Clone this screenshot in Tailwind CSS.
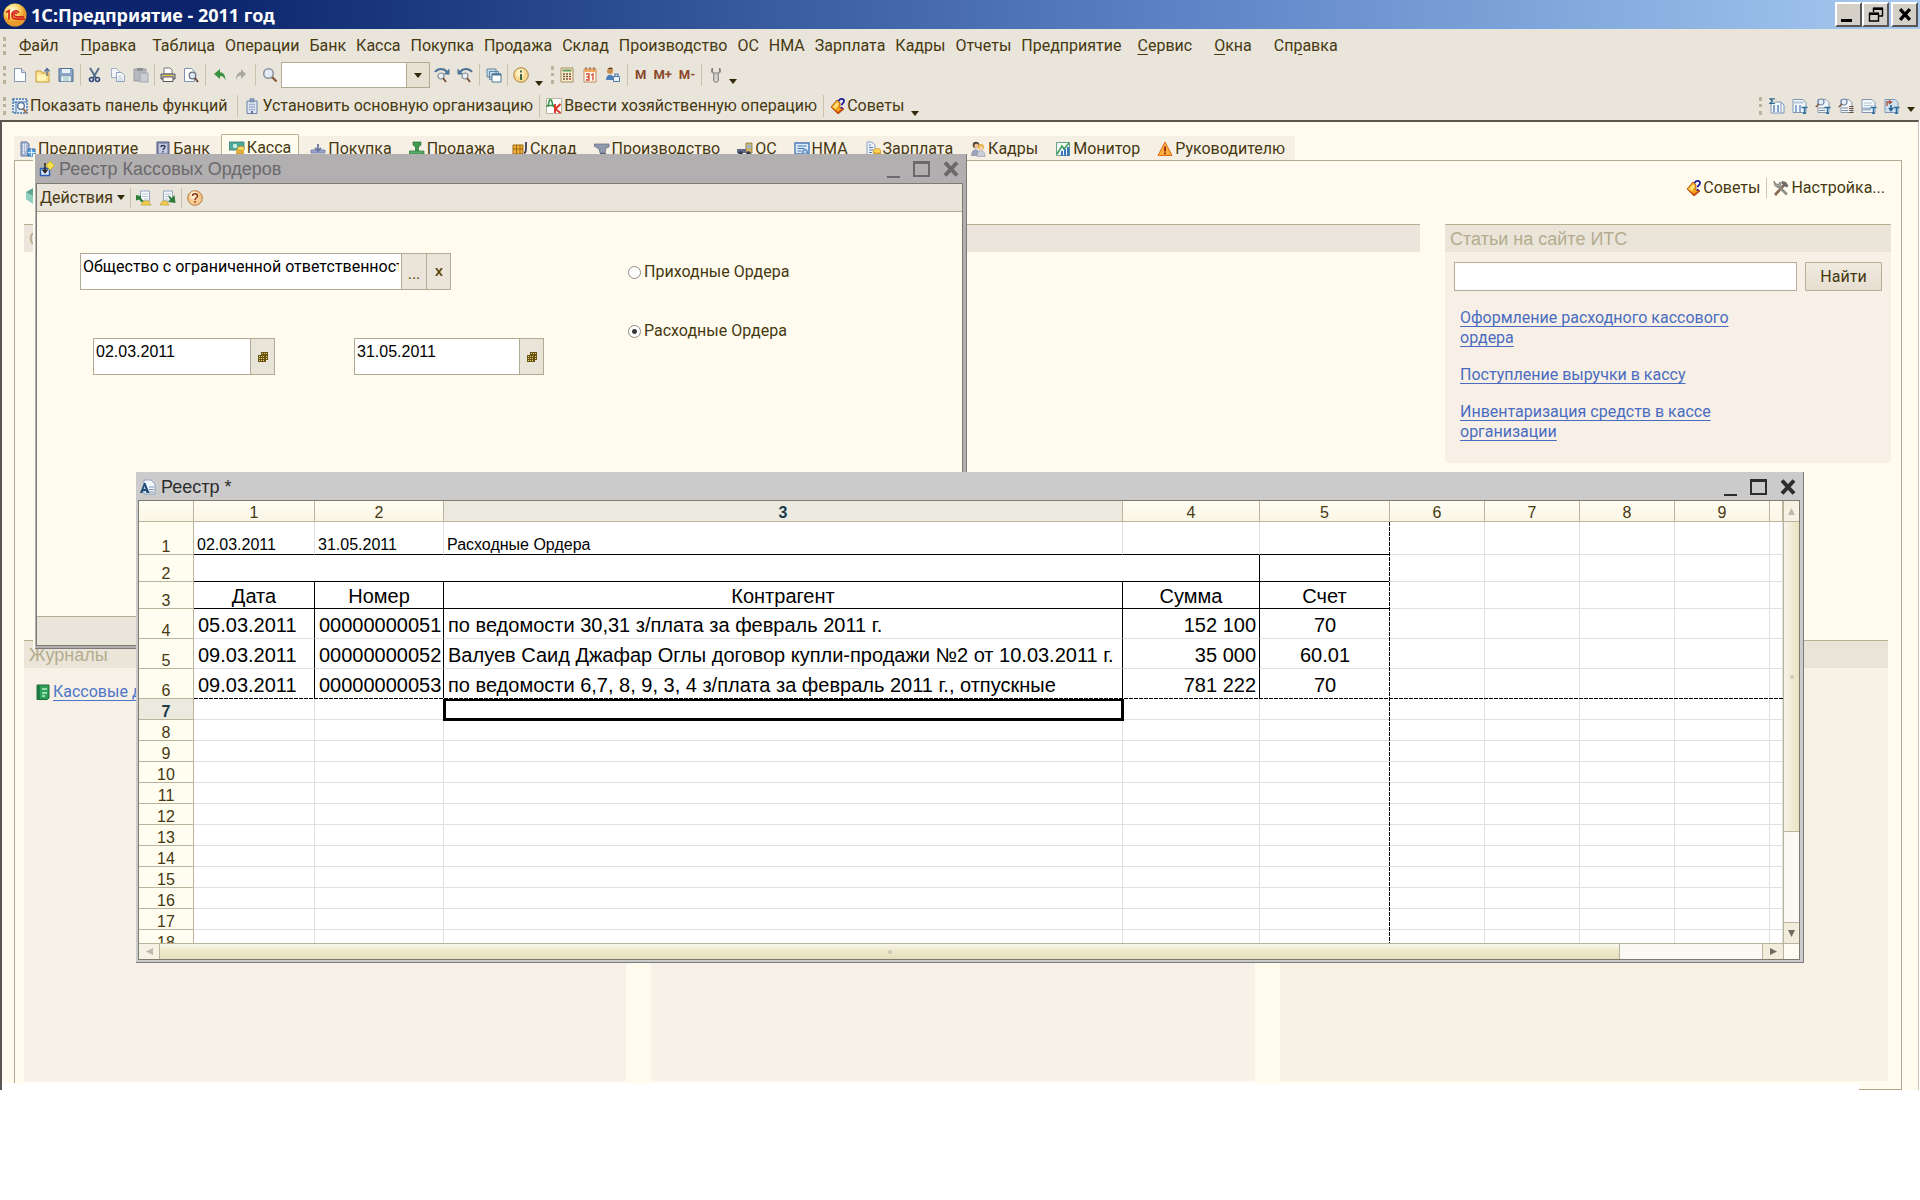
<!DOCTYPE html>
<html lang="ru">
<head>
    <meta charset="UTF-8">
    <meta name="viewport" content="width=device-width, initial-scale=1.0">
    <title>1С:Предприятие - 2011 год</title>
    <script src="https://cdn.jsdelivr.net/npm/@tailwindcss/browser@4"></script>
</head>
<body class="bg-white font-[Roboto,'Liberation_Sans',sans-serif] text-[16px] leading-5 text-[#463811] overflow-hidden">

    <!-- shared icons -->
    <svg class="hidden">
        <symbol id="i-tips" viewBox="0 0 16 16">
            <path d="M1 9l6-7 3 3v5l4 1-6 5z" fill="#f5a21b" stroke="#a4420c" stroke-width=".8"/>
            <path d="M1 9l7 7 6-5-1-1-5 4z" fill="#c8470f"/>
            <path d="M3 9l4-5 2 2-3 5z" fill="#ffe27a"/>
            <path d="M9 3.200c0-3 5-3 5 0 0 2-2.200 2-2.200 4M11.800 9v1.600" fill="none" stroke="#1b1b9a" stroke-width="1.800"/>
        </symbol>
        <symbol id="i-cal" viewBox="0 0 10 12">
            <path d="M3 1h7v8H8v2H0V4h3z" fill="#6b5410"/>
            <path d="M4 2.500h1M6 2.500h1M8 2.500h1M1 5.500h1M3 5.500h1M5 5.500h1M8 5.500h1M1 7.500h1M3 7.500h1M5 7.500h1M8 7.500h1M1 9.500h1M3 9.500h1M5 9.500h1" stroke="#e2cf86"/>
        </symbol>
        <symbol id="i-min" viewBox="0 0 13 18"><path d="M0 17h13" stroke="currentColor" stroke-width="2"/></symbol>
        <symbol id="i-max" viewBox="0 0 17 18"><path d="M1 2h15v14H1z" fill="none" stroke="currentColor" stroke-width="2"/><path d="M0 2.500h17" stroke="currentColor" stroke-width="3"/></symbol>
        <symbol id="i-close" viewBox="0 0 16 16"><path d="M2 1.500l12 13M14 1.500l-12 13" stroke="currentColor" stroke-width="4"/></symbol>
        <symbol id="i-down" viewBox="0 0 8 5"><path d="M0 0h8L4 5z" fill="#33280a"/></symbol>
    </svg>

    <!-- title bar -->
    <header class="flex h-[29px] items-center bg-linear-to-r from-[#0b246b] from-10% via-[#5b80c4] via-60% to-[#a6caf0] pr-[2px] pl-[3px]">
        <svg class="h-6 w-6" viewBox="0 0 24 24">
            <defs><radialGradient id="g1" cx=".4" cy=".3"><stop offset="0" stop-color="#fffbe0"/><stop offset=".6" stop-color="#fbd66a"/><stop offset="1" stop-color="#e99a2c"/></radialGradient></defs>
            <circle cx="12" cy="12" r="11.500" fill="url(#g1)"/>
            <path d="M3 9.500l3-2v9M16 10c-1-3-7-3-7 2s3 4 13 4M14 11c-1-1.500-3-1.500-3 .8s2 2 10 2" fill="none" stroke="#d3261c" stroke-width="1.700"/>
        </svg>
        <h1 class="ml-1 font-['Noto_Sans',sans-serif] text-[18px] font-bold text-white">1С:Предприятие - 2011 год</h1>
        <div class="ml-auto flex text-black">
            <button aria-label="Свернуть" class="flex h-[25px] w-[27px] items-end justify-center border-2 border-t-white border-l-white border-r-[#555] border-b-[#555] bg-[#d4d0c8] pb-[3px]"><span class="mr-1 h-[3px] w-[11px] bg-black"></span></button>
            <button aria-label="Восстановить" class="flex h-[25px] w-[27px] items-center justify-center border-2 border-t-white border-l-white border-r-[#555] border-b-[#555] bg-[#d4d0c8]">
                <svg class="h-[15px] w-4" viewBox="0 0 16 15"><path d="M5 1.500h10M5.500 1v4M14.500 1v8M10 9h5M1 6.500h10M1.500 6v8h9V6" fill="none" stroke="#000" stroke-width="1.400"/><path d="M5 1.700h10M1 6.700h10" stroke="#000" stroke-width="2.400"/></svg>
            </button>
            <button aria-label="Закрыть" class="ml-[2px] flex h-[25px] w-[27px] items-center justify-center border-2 border-t-white border-l-white border-r-[#555] border-b-[#555] bg-[#d4d0c8]"><svg class="h-[13px] w-4"><use href="#i-close"/></svg></button>
        </div>
    </header>

    <!-- menu and toolbars -->
    <div class="bg-[#e9e5da]">
        <nav class="flex h-[31px] items-center pt-[2px] pl-[3px]">
            <span class="mr-[7px] h-[18px] border-l-3 border-dotted border-[#b9b39b]"></span>
            <div class="flex gap-[10px]">
                <button class="px-[6px]"><span class="underline underline-offset-3">Ф</span>айл</button>
                <button class="px-[6px]"><span class="underline underline-offset-3">П</span>равка</button>
                <button>Таблица</button>
                <button>Операции</button>
                <button>Банк</button>
                <button>Касса</button>
                <button>Покупка</button>
                <button>Продажа</button>
                <button>Склад</button>
                <button>Производство</button>
                <button>ОС</button>
                <button>НМА</button>
                <button>Зарплата</button>
                <button>Кадры</button>
                <button>Отчеты</button>
                <button>Предприятие</button>
                <button class="px-[6px]"><span class="underline underline-offset-3">С</span>ервис</button>
                <button class="px-[6px]"><span class="underline underline-offset-3">О</span>кна</button>
                <button class="px-[6px]">Сп<span class="underline underline-offset-3">р</span>авка</button>
            </div>
        </nav>

        <div class="flex h-[30px] items-center pl-[3px]">
            <span class="mr-[6px] h-[18px] border-l-3 border-dotted border-[#b9b39b]"></span>
            <div class="flex gap-[7px]">
                <button aria-label="Новый"><svg class="size-4" viewBox="0 0 16 16"><path d="M2.500 1.500h7l4 4v9h-11z" fill="#fdfeff" stroke="#8496b4"/><path d="M9.500 1.500v4h4" fill="#cfdcec" stroke="#8496b4"/></svg></button>
                <button aria-label="Открыть"><svg class="size-4" viewBox="0 0 16 16"><path d="M1 4h5l1 2h7v9H1z" fill="#fce38a" stroke="#c89a3a"/><path d="M2 8h9v6H2z" fill="#fff3b8"/><path d="M12 9V2M9.500 4.500L12 1.500l2.500 3" fill="none" stroke="#54688e" stroke-width="1.300"/></svg></button>
                <button aria-label="Сохранить"><svg class="size-4" viewBox="0 0 16 16"><path d="M1 1.500h13l1 1v12H1z" fill="#8aa5c8" stroke="#54708f"/><path d="M4 2h8v4H4z" fill="#e9f1f8"/><path d="M3 9h10v5.500H3z" fill="#f4f7fb" stroke="#6b84a4" stroke-width=".6"/><path d="M5 11h6M5 13h6" stroke="#8ba"/></svg></button>
            </div>
            <span class="mx-[6px] h-[22px] w-px bg-[#c9c3ae]"></span>
            <div class="flex gap-[7px]">
                <button aria-label="Вырезать"><svg class="size-4" viewBox="0 0 16 16"><path d="M3 1l6 10M12 1L6 11" stroke="#56708c" stroke-width="2"/><circle cx="4.500" cy="12.500" r="2" fill="none" stroke="#2f4a78" stroke-width="1.600"/><circle cx="10.500" cy="12.500" r="2" fill="none" stroke="#2f4a78" stroke-width="1.600"/></svg></button>
                <button aria-label="Копировать"><svg class="size-4" viewBox="0 0 16 16"><path d="M1.500 1.500h5l3 3v6h-8z" fill="#f2f6fa" stroke="#9fb0c6"/><path d="M6.500 5.500h5l3 3v6h-8z" fill="#fff" stroke="#8ba0bd"/><path d="M8 9h4M8 11h5M8 13h5" stroke="#b3c2d6"/></svg></button>
                <button aria-label="Вставить"><svg class="size-4" viewBox="0 0 16 16"><path d="M1 2h12v12H1z" fill="#b6b9bd" stroke="#9a9da3"/><path d="M4 1h6v3H4z" fill="#8d9197"/><path d="M7 6h8v9H7z" fill="#c9ccd2" stroke="#a4a8b1"/></svg></button>
            </div>
            <span class="mx-[5px] h-[22px] w-px bg-[#c9c3ae]"></span>
            <div class="flex gap-[7px]">
                <button aria-label="Печать"><svg class="size-4" viewBox="0 0 16 16"><path d="M4 1h6l2 2v4H4z" fill="#fff" stroke="#777"/><path d="M1 7h14v5H1z" fill="#b9b3a8" stroke="#555"/><path d="M3 10h10v4.500H3z" fill="#fff" stroke="#555"/><path d="M4 8.500h8" stroke="#e7c33c"/></svg></button>
                <button aria-label="Предварительный просмотр"><svg class="size-4" viewBox="0 0 16 16"><path d="M1.500 1.500h7l3 3v10h-10z" fill="#fff" stroke="#7f93b0"/><circle cx="9.500" cy="8.500" r="3.300" fill="#d8e7f3" stroke="#6a6f78" stroke-width="1.200"/><path d="M12 11l3 4" stroke="#6a4a40" stroke-width="2"/></svg></button>
            </div>
            <span class="mx-[6px] h-[22px] w-px bg-[#c9c3ae]"></span>
            <div class="flex gap-[5px]">
                <button aria-label="Отменить"><svg class="size-4" viewBox="0 0 16 16"><path d="M2 7l6-5v3.200c4 .3 5.500 3.500 5.500 8.300-1-3-2.500-4.500-5.500-4.500V12z" fill="#3a9140"/></svg></button>
                <button aria-label="Вернуть"><svg class="size-4" viewBox="0 0 16 16"><path d="M13 7L8 2v3C4 5.500 3 9 3 13c1-3 2-4.500 5-4.500V12z" fill="#a9a8a2"/></svg></button>
            </div>
            <span class="mx-[6px] h-[22px] w-px bg-[#c9c3ae]"></span>
            <button aria-label="Найти"><svg class="size-4" viewBox="0 0 16 16"><circle cx="6.500" cy="6.500" r="4.800" fill="#e2ecf6" stroke="#8c94a0" stroke-width="1.600"/><path d="M10 10l4.500 4.500" stroke="#8a5a3c" stroke-width="2.400"/></svg></button>
            <div class="ml-[3px] flex h-[26px] border border-[#b1ab92]">
                <input type="text" aria-label="Поиск" class="w-[124px] bg-white px-1 outline-none">
                <button aria-label="Показать список" class="flex w-[23px] items-center justify-center border-l border-[#b1ab92] bg-[#e6e1d2]"><svg class="h-[5px] w-[8px]"><use href="#i-down"/></svg></button>
            </div>
            <div class="ml-1 flex gap-[7px]">
                <button aria-label="Найти далее"><svg class="size-4" viewBox="0 0 16 16"><path d="M1 5c3-4 9-4 12 0" fill="none" stroke="#4d7396" stroke-width="2"/><path d="M15.500 1.500v6h-6z" fill="#4d7396"/><circle cx="7" cy="9" r="3" fill="#e9f0f6" stroke="#858c96" stroke-width="1.200"/><path d="M9 11l3 4" stroke="#7c5138" stroke-width="1.800"/></svg></button>
                <button aria-label="Найти назад"><svg class="size-4" viewBox="0 0 16 16"><path d="M3 5c3-4 9-4 12 0" fill="none" stroke="#4d7396" stroke-width="2"/><path d="M.5 1.500v6h6z" fill="#4d7396"/><circle cx="8" cy="9" r="3" fill="#e9f0f6" stroke="#858c96" stroke-width="1.200"/><path d="M10 11l3 4" stroke="#7c5138" stroke-width="1.800"/></svg></button>
            </div>
            <span class="mx-[6px] h-[22px] w-px bg-[#c9c3ae]"></span>
            <button aria-label="Окна"><svg class="size-4" viewBox="0 0 16 16"><path d="M1 2h9v8H1zM3.500 4.500h9v8h-9z" fill="#c9dbe8" stroke="#5d86a4"/><path d="M6 7h9v8H6z" fill="#fff" stroke="#4b7696"/><path d="M6 7.500h9" stroke="#4b7696" stroke-width="2"/></svg></button>
            <span class="mx-[5px] h-[22px] w-px bg-[#c9c3ae]"></span>
            <button aria-label="Информация"><svg class="size-4" viewBox="0 0 16 16"><circle cx="8" cy="8" r="7.300" fill="#f8d88c" stroke="#a88446"/><circle cx="7" cy="6" r="4" fill="#fff1c4"/><path d="M8 7v6M8 3.500v2" stroke="#3c6a46" stroke-width="2"/></svg></button>
            <svg class="mt-4 ml-[6px] h-[5px] w-[8px]"><use href="#i-down"/></svg>
            <span class="mr-[5px] ml-[8px] h-[18px] border-l-3 border-dotted border-[#b9b39b]"></span>
            <div class="flex gap-[7px]">
                <button aria-label="Калькулятор"><svg class="size-4" viewBox="0 0 16 16"><path d="M2 1h12v14H2z" fill="#f7eed2" stroke="#a88d5d"/><path d="M3.500 2.500h9v2h-9z" fill="#5fa05a"/><path d="M4 7h2M7 7h2M10 7h2M4 9.500h2M7 9.500h2M10 9.500h2M4 12h2M7 12h2" stroke="#7a5535" stroke-width="1.500"/><path d="M10 12h2" stroke="#c33" stroke-width="1.500"/></svg></button>
                <button aria-label="Календарь"><svg class="size-4" viewBox="0 0 16 16"><path d="M2 2h12v13H2z" fill="#fffaf0" stroke="#c38a5c"/><path d="M2 2h12v3H2z" fill="#f1a961"/><path d="M4 0v3M8 0v3M12 0v3" stroke="#8a5c3c"/><path d="M4 7h3v6H4M4.500 10H7M9 8l2-1v6.500" fill="none" stroke="#d0492e" stroke-width="1.300"/></svg></button>
                <button aria-label="Пользователь"><svg class="size-4" viewBox="0 0 16 16"><circle cx="5" cy="4" r="3" fill="#c98d52"/><path d="M3 2c1-2 4-2 5 0z" fill="#5a4020"/><path d="M1 13c0-7 8-7 8 0z" fill="#4d82b8"/><path d="M8.500 9.500h6v5h-6z" fill="#e9f1f7" stroke="#5078a4"/><path d="M10 9V7h3v2" fill="none" stroke="#5078a4" stroke-width="1.200"/></svg></button>
            </div>
            <span class="mx-[6px] h-[22px] w-px bg-[#c9c3ae]"></span>
            <div class="ml-px flex gap-[7px] text-[13px] leading-4 font-bold text-[#8a4a2c]">
                <button>M</button>
                <button>M+</button>
                <button>M-</button>
            </div>
            <span class="mx-[6px] h-[22px] w-px bg-[#c9c3ae]"></span>
            <button aria-label="Параметры"><svg class="size-4" viewBox="0 0 16 16"><path d="M4.500 1c-2 2-1 5 1.500 6l-.5 6c0 3 5 3 5 0L10 7c2.500-1 3.500-4 1.500-6v3.500L9.500 6h-3l-2-1.500z" fill="#d3d2cf" stroke="#7c7a76"/></svg></button>
            <svg class="mt-3 ml-[5px] h-[5px] w-[8px]"><use href="#i-down"/></svg>
        </div>

        <div class="flex h-[30px] items-center pt-px pl-[3px]">
            <span class="mr-[6px] h-[18px] border-l-3 border-dotted border-[#b9b39b]"></span>
            <button class="flex items-center gap-[2px]">
                <svg class="size-4" viewBox="0 0 16 16"><path d="M1 1h14v14H1z" fill="#e3edf7" stroke="#3f73ad" stroke-width="1.400" stroke-dasharray="2 1"/><path d="M1 4h14M4 4v11" stroke="#3f73ad"/><circle cx="9" cy="8" r="3.300" fill="#fff" stroke="#4a6f96" stroke-width="1.300"/><path d="M11 10.500l3.500 4.500" stroke="#a56a3a" stroke-width="2"/></svg>
                Показать панель функций
            </button>
            <span class="mr-[6px] ml-[10px] h-[22px] w-px bg-[#c9c3ae]"></span>
            <button class="flex items-center gap-[2px]">
                <svg class="size-4" viewBox="0 0 16 16"><path d="M3 3h10v12.500H3z" fill="#dfe7f2" stroke="#6b82a8"/><path d="M6 .8h4v3H6z" fill="#8fa4c4" stroke="#5d7498" stroke-width=".7"/><path d="M5 6.500h6M5 9h6M5 11.500h6" stroke="#8ba0c2" stroke-dasharray="1.500 .7" stroke-width="1.400"/><path d="M7 13h2v2.500H7z" fill="#5d7498"/></svg>
                Установить основную организацию
            </button>
            <span class="mx-[6px] h-[22px] w-px bg-[#c9c3ae]"></span>
            <button class="flex items-center gap-[2px]">
                <svg class="size-4" viewBox="0 0 16 16"><path d="M.5.5h15v15H.5z" fill="#fff" stroke="#b9b39b"/><path d="M1 9V8h1l1.500-6h2L7 8h1v1.500M2.500 7.500h4" fill="none" stroke="#2f9148" stroke-width="1.500"/><path d="M9 6v9M14.500 6l-5 5 5 4" fill="none" stroke="#e0352b" stroke-width="1.900"/></svg>
                Ввести хозяйственную операцию
            </button>
            <span class="mx-[6px] h-[22px] w-px bg-[#c9c3ae]"></span>
            <button class="flex items-center gap-px"><svg class="size-4"><use href="#i-tips"/></svg>Советы</button>
            <svg class="mt-[16px] ml-[7px] h-[5px] w-[8px]"><use href="#i-down"/></svg>

            <div class="ml-auto flex items-center gap-[7px] pr-[5px]">
                <span class="h-[18px] border-l-3 border-dotted border-[#b9b39b]"></span>
                <button aria-label="Итоги"><svg class="size-4" viewBox="0 0 16 16"><path d="M2 4h10l3 3v8H2z" fill="#f4f8fb" stroke="#7f95b3"/><path d="M4 7h2v7H4zM8 7h2v7H8z" fill="#7fa3cc"/><path d="M12 4v11" stroke="#7f95b3"/><path d="M6 .8H1L3.500 3 1 5.400h5" fill="#e9e5da" stroke="#2b6a8c" stroke-width="1.200"/></svg></button>
                <button aria-label="Таблица"><svg class="size-4" viewBox="0 0 16 16"><path d="M1 1.500h10l3 3v10H1z" fill="#f4f8fb" stroke="#7f95b3"/><path d="M1.500 3.500h10v2h-10z" fill="#b5c6d8"/><path d="M3 7h2v7H3zM7 7h2v7H7z" fill="#8fabd0"/><path d="M9.500 9.500h6M12.500 9.500v6M11 15.500h3" stroke="#2b6fa0" stroke-width="1.500"/></svg></button>
                <button aria-label="Найти текст"><svg class="size-4" viewBox="0 0 16 16"><path d="M3 1.500h8l3 3v10H3z" fill="#f4f8fb" stroke="#8d98aa"/><circle cx="6" cy="4" r="3" fill="#e8eff6" stroke="#6f87ae" stroke-width="1.200"/><path d="M4 6L.8 9" stroke="#8a5a3c" stroke-width="1.600"/><path d="M4 10h6M4 12.500h6" stroke="#7a8ca3"/><path d="M9.500 9.500h6M12.500 9.500v6M11 15.500h3" stroke="#2b6fa0" stroke-width="1.500"/></svg></button>
                <button aria-label="Найти строку"><svg class="size-4" viewBox="0 0 16 16"><path d="M3 1.500h8l3 3v10H3z" fill="#f4f8fb" stroke="#8d98aa"/><circle cx="6" cy="4" r="3" fill="#e8eff6" stroke="#6f87ae" stroke-width="1.200"/><path d="M4 6L.8 9" stroke="#8a5a3c" stroke-width="1.600"/><path d="M4 10h6M4 12.500h6" stroke="#7a8ca3"/><path d="M11 8.500h4.500M11 10.500h4.500M11 12.500h4.500M11 14.500h4.500" stroke="#6b5140" stroke-width="1.100"/></svg></button>
                <button aria-label="Текст"><svg class="size-4" viewBox="0 0 16 16"><path d="M1 1.500h10l3 3v10H1z" fill="#f4f8fb" stroke="#7f95b3"/><path d="M3 5h8M3 7.500h9" stroke="#b5c6d8"/><path d="M1 9.500h9v3H1z" fill="#9db4cc"/><path d="M9.500 9.500h6M12.500 9.500v6M11 15.500h3" stroke="#2b6fa0" stroke-width="1.500"/></svg></button>
                <button aria-label="Обновить"><svg class="size-4" viewBox="0 0 16 16"><path d="M1 1.500h10l3 3v10H1z" fill="#cfe0ee" stroke="#7f95b3"/><path d="M3 8V4h4M5 2.500L7.500 4 5 6" fill="none" stroke="#a3533c" stroke-width="1.400"/><path d="M7 7v5M5 10l2 2.500L9 10" fill="none" stroke="#2b5f8a" stroke-width="1.600"/><path d="M9.500 9.500h6M12.500 9.500v6M11 15.500h3" stroke="#2b6fa0" stroke-width="1.500"/></svg></button>
                <svg class="mt-2 h-[5px] w-[8px]"><use href="#i-down"/></svg>
            </div>
        </div>
    </div>

    <!-- workspace -->
    <div class="relative pr-px">
        <main class="border-t-2 border-r border-l-2 border-t-[#5b564b] border-r-[#c9c3b5] border-l-[#5b5654] bg-[#fffcef] pt-[12px] pr-[16px] pl-[12px]">
            <div class="flex h-[26px] items-end">
                <div class="flex h-6 items-center gap-[17px] bg-[#f6f0e4] pt-[2px] pr-[10px] pl-[6px] whitespace-nowrap">
                    <button class="flex items-center gap-[2px]"><svg class="size-4" viewBox="0 0 16 16"><path d="M1 1h6l2 2v12H1z" fill="#a9b9d6" stroke="#6378a4"/><path d="M3 4h1M5 4h1M3 6.500h1M5 6.500h1M3 9h1M5 9h1M3 11.500h1" stroke="#fff" stroke-width="1.400"/><path d="M8 8h7v7H8z" fill="#5aa3dc" stroke="#2f6fa8"/><path d="M8 11.500h7M11.500 8v7" stroke="#d8ecfa"/></svg>Предприятие</button>
                    <button class="flex items-center gap-[2px]"><svg class="size-4" viewBox="0 0 16 16"><path d="M2 1h12v13H2z" fill="#8f98b8" stroke="#4c5678"/><path d="M4 3h8v9H4z" fill="#c5cce0"/><path d="M6 6c0-2 4-2 4 0 0 1.500-2 1.500-2 3M8 10v1.500" fill="none" stroke="#2e3655" stroke-width="1.400"/></svg>Банк</button>
                    <button class="-mx-[6px] flex h-[26px] items-center gap-[2px] self-end rounded-t-[2px] border border-b-0 border-[#b5b08f] bg-[#fffcef] px-[7px]"><svg class="size-4" viewBox="0 0 16 16"><path d="M0 2h15v8H0z" fill="#4fa99a" stroke="#367c72" stroke-width=".8"/><circle cx="6" cy="6" r="2.200" fill="#cfeee4"/><ellipse cx="11" cy="13" rx="4" ry="2.200" fill="#d9982a"/><ellipse cx="11" cy="11" rx="4" ry="2.200" fill="#e8b13e"/><ellipse cx="12" cy="8.500" rx="3.500" ry="2.200" fill="#fbd765" stroke="#b67f1c" stroke-width=".6"/></svg>Касса</button>
                    <button class="flex items-center gap-[2px]"><svg class="size-4" viewBox="0 0 16 16"><path d="M1 9h14v3H1z" fill="#9aa6cc" stroke="#6a76a2" stroke-width=".8"/><path d="M8 3v7M5 7l3 3 3-3" fill="none" stroke="#6a76a2" stroke-width="1.800"/></svg>Покупка</button>
                    <button class="flex items-center gap-[2px]"><svg class="size-4" viewBox="0 0 16 16"><path d="M4 1h8v3L9.500 6v4h-3V6L4 4z" fill="#3f9a50" stroke="#2b7038" stroke-width=".7"/><path d="M0 10h15v3H0z" fill="#59b06a" stroke="#2b7038" stroke-width=".7"/></svg>Продажа</button>
                    <button class="flex items-center gap-[2px]"><svg class="size-4" viewBox="0 0 16 16"><path d="M1 4h10v9H1z" fill="#f2b23a" stroke="#9d6514"/><path d="M1 8h10M4.500 4v9M8 4v9" stroke="#9d6514"/><path d="M12 12c2 0 2-2 2-5V1" fill="none" stroke="#3a3f55" stroke-width="1.800"/></svg>Склад</button>
                    <button class="flex items-center gap-[2px]"><svg class="size-4" viewBox="0 0 16 16"><path d="M0 3h15v3l-3 1-1 5H6L5 8 0 5z" fill="#8f98ac" stroke="#626b80" stroke-width=".7"/><path d="M6 12h6v2H6z" fill="#5a6276"/></svg>Производство</button>
                    <button class="flex items-center gap-[2px]"><svg class="size-4" viewBox="0 0 16 16"><path d="M9 2h6v10H9z" fill="#d1b56a" stroke="#7b6a38" stroke-width=".7"/><path d="M0 8h9v4H0z" fill="#5d6a88"/><path d="M10 4h4v3h-4z" fill="#9cb8d8"/><circle cx="3.500" cy="12.500" r="2.200" fill="#33384a"/><circle cx="11.500" cy="12.500" r="2.200" fill="#33384a"/></svg>ОС</button>
                    <button class="flex items-center gap-[2px]"><svg class="size-4" viewBox="0 0 16 16"><path d="M1 2h14v11H1z" fill="#dceaf8" stroke="#4878b4" stroke-width="1.400"/><path d="M3.500 5h9M3.500 7.500h7M3.500 10h4" stroke="#4878b4"/><circle cx="11" cy="11" r="2.500" fill="#a8c5e8" stroke="#4878b4"/></svg>НМА</button>
                    <button class="flex items-center gap-[2px]"><svg class="size-4" viewBox="0 0 16 16"><path d="M2 1h5l3 3v11H2z" fill="#eef3fa" stroke="#8ba0c4"/><path d="M4 4h2M4 6.500h4M4 9h4M4 11.500h3" stroke="#5b7db4" stroke-width="1.200"/><ellipse cx="12" cy="12" rx="4" ry="2.400" fill="#d99c24"/><ellipse cx="12" cy="10" rx="4" ry="2.400" fill="#fbd456" stroke="#b98718" stroke-width=".6"/></svg>Зарплата</button>
                    <button class="flex items-center gap-[2px]"><svg class="size-4" viewBox="0 0 16 16"><circle cx="6" cy="4" r="3.300" fill="#5a4636"/><circle cx="6.500" cy="5" r="2.200" fill="#f0c49a"/><path d="M1 15c0-9 9-9 9 0z" fill="#9aa3b5"/><circle cx="11" cy="6" r="3" fill="#e8b23e"/><circle cx="11" cy="7" r="2" fill="#f6d3ae"/><path d="M7 15.500c0-8 8-8 8 0z" fill="#c9ced9" stroke="#8088a0" stroke-width=".5"/></svg>Кадры</button>
                    <button class="flex items-center gap-[2px]"><svg class="size-4" viewBox="0 0 16 16"><path d="M1.500 1.500h13v13h-13z" fill="#f3f8f4" stroke="#63a585"/><path d="M2 13L7 5l2 3 5-6" fill="none" stroke="#3a9a5e" stroke-width="1.500"/><path d="M6 10h2v5H6zM9 8h2v7H9zM12 6h2.500v9H12z" fill="#3a76bc"/></svg>Монитор</button>
                    <button class="flex items-center gap-[2px]"><svg class="size-4" viewBox="0 0 16 16"><path d="M8 1l7 13.500H1z" fill="#fbb03b" stroke="#dd6a1c" stroke-linejoin="round"/><path d="M8 5.500v5M8 11.500v1.800" stroke="#a82a12" stroke-width="2"/></svg>Руководителю</button>
                </div>
            </div>

            <!-- tab page -->
            <div class="border border-b-0 border-[#b0ab92] pr-[10px] pl-[9px]">
                <div class="flex h-[63px] items-center justify-between pr-[6px] pb-[9px]">
                    <svg class="mt-4 ml-[2px] h-5 w-5" viewBox="0 0 20 20"><path d="M0 6l9-5 9 4v9l-9 5-9-6z" fill="#5fa592"/><path d="M0 6l9 5v8l-9-6z" fill="#8fd0bd"/></svg>
                    <div class="flex items-center">
                        <button class="flex items-center gap-px"><svg class="size-4"><use href="#i-tips"/></svg>Советы</button>
                        <span class="mx-[6px] h-5 w-px bg-[#c9c6bb]"></span>
                        <button class="flex items-center gap-[2px]"><svg class="size-4" viewBox="0 0 16 16"><path d="M2 15L12 4" stroke="#8a6a55" stroke-width="2.800"/><path d="M9 1l4 1 2.500 4-2 1.500L8 3z" fill="#6b6b6b"/><path d="M5 6l9 8.500" stroke="#8e8e88" stroke-width="2.600"/><path d="M1 1c0 4 1 6 4 6s3-3 2-5L5.500 4.500 3 4z" fill="#a9a9a2" stroke="#66665f" stroke-width=".7"/></svg>Настройка...</button>
                    </div>
                </div>
                <div class="flex gap-[25px] text-[18px]">
                    <section class="min-w-0 flex-1">
                        <h2 class="h-[28px] border-t border-[#b8ae93] bg-[#ebe5dc] pt-[4px] pl-[5px] text-[#b3ac8f]">Отчеты</h2>
                    </section>
                    <section class="w-[446px] bg-[#f8f0e7]">
                        <h2 class="h-[28px] border-t border-[#b8ae93] bg-[#ebe4d9] pt-[4px] pl-[5px] font-['Liberation_Sans',sans-serif] text-[#b3ac8f]">Статьи на сайте ИТС</h2>
                        <div class="px-[9px] pt-[10px] pb-[21px] text-[16px]">
                            <form class="flex gap-[8px]">
                                <input type="search" aria-label="Поиск статей" class="h-[29px] min-w-0 flex-1 border border-[#b5ad96] bg-white px-1 outline-none">
                                <button type="button" class="h-[29px] w-[77px] rounded-[1px] border border-[#b5ad96] bg-linear-to-b from-[#f0e9de] to-[#e6dfd1]">Найти</button>
                            </form>
                            <ul class="w-[290px] space-y-[17px] pt-[17px] pl-[6px] text-[#4a6cc0]">
                                <li><a href="#" class="underline underline-offset-3">Оформление расходного кассового ордера</a></li>
                                <li><a href="#" class="underline underline-offset-3">Поступление выручки в кассу</a></li>
                                <li><a href="#" class="underline underline-offset-3">Инвентаризация средств в кассе организации</a></li>
                            </ul>
                        </div>
                    </section>
                </div>
                <div class="mt-[177px] grid grid-cols-[602fr_605fr_608fr] gap-[25px] pr-[3px]">
                    <section class="h-[441px] bg-[#f7f0e6]">
                        <h2 class="h-[28px] border-t border-[#b8ae93] bg-[#ebe5d9] pt-[4px] pl-[5px] font-['Liberation_Sans',sans-serif] text-[18px] text-[#b3ac8f]">Журналы</h2>
                        <a href="#" class="mt-[14px] ml-[11px] flex w-fit items-center gap-[2px] text-[#4d76c8]">
                            <svg class="size-4" viewBox="0 0 16 16"><path d="M2 1h12v13l-2 1.500H2z" fill="#2fa05a" stroke="#1c6a3a"/><path d="M2 1h3v14H2z" fill="#1d7a42"/><path d="M7 5h5M7 9h5M7 12h3" stroke="#bff0cc" stroke-width="1.300"/></svg>
                            <span class="underline underline-offset-3">Кассовые документы</span>
                        </a>
                    </section>
                    <section class="bg-[#f7f1e7]"><h2 class="h-[28px] border-t border-[#b8ae93] bg-[#e9e5da] pl-[5px] text-[18px]"></h2></section>
                    <section class="bg-[#f7f1e6]"><h2 class="h-[28px] border-t border-[#b8ae93] bg-[#e8e4d8] pl-[5px] text-[18px]"></h2></section>
                </div>
                <div class="h-[2px]"></div>
            </div>
        </main>
        <div class="flex justify-between border-l-2 border-[#5b5654] pl-[12px]">
            <span></span>
            <div class="flex h-[7px] w-[60px] border-r border-[#c9c3b5] bg-[#fffcef]"><span class="h-[7px] w-[43px] border-r border-b border-[#b5a58f]"></span></div>
        </div>

        <!-- cash orders dialog -->
        <section class="absolute top-[34px] left-[35px] h-[495px] w-[932px] border-r border-b border-[#7d7b79] bg-[#b1afb0] pr-[3px] pb-[2px] pl-px shadow-[-2px_0_0_#fffcf0]">
            <div class="flex h-[29px] items-center pt-px pl-[3px] text-[#6b696b]">
                <svg class="size-4" viewBox="0 0 16 16"><path d="M1.500 7.500h9v7h-9z" fill="#dfeaf8" stroke="#2e5fb0" stroke-width="1.500"/><path d="M6 2v9M3.500 8.500L6 11.500l2.500-3" fill="none" stroke="#222" stroke-width="1.500"/><path d="M11 0l4.500 4.500L11 9 7 4.500z" fill="#f6e14a" stroke="#b9a020" stroke-width=".7"/></svg>
                <h2 class="ml-[4px] font-['Liberation_Sans',sans-serif] text-[18px]">Реестр Кассовых Ордеров</h2>
                <div class="ml-auto flex items-center gap-[13px] pr-[4px]">
                    <button aria-label="Свернуть"><svg class="h-[18px] w-[13px]"><use href="#i-min"/></svg></button>
                    <button aria-label="Развернуть"><svg class="h-[18px] w-[17px]"><use href="#i-max"/></svg></button>
                    <button aria-label="Закрыть"><svg class="size-4"><use href="#i-close"/></svg></button>
                </div>
            </div>
            <div class="flex h-[463px] flex-col border border-[#7d7b70] bg-[#fffcef]">
                <div class="flex h-[28px] shrink-0 items-center border-b border-[#b0ab92] bg-[#e9e5da] pl-[3px]">
                    <button class="flex items-center gap-[4px]">Действия<svg class="h-[5px] w-[8px]"><use href="#i-down"/></svg></button>
                    <span class="mr-[5px] ml-[5px] h-5 w-px bg-[#c9c3ae]"></span>
                    <div class="flex gap-[8px]">
                        <button aria-label="Загрузить"><svg class="size-4" viewBox="0 0 16 16"><path d="M4.500 1h9v10h-9z" fill="#f7f9fc" stroke="#93a5be"/><path d="M6 4h6M6 6.500h6M8 9h4" stroke="#b7c4d6"/><path d="M0 5l5 1v2l2.500 3-1.500 1.500L3 9.500l-3 1z" fill="#2f7d3a"/><path d="M5 15l2.500-4h5l2.500 4z" fill="#f2cd4c" stroke="#b9962c" stroke-width=".6"/></svg></button>
                        <button aria-label="Выгрузить"><svg class="size-4" viewBox="0 0 16 16"><path d="M3.500 1h9v10h-9z" fill="#f7f9fc" stroke="#93a5be"/><path d="M5 4h6M5 6.500h5M5 9h3" stroke="#b7c4d6"/><path d="M8 5l4 3 2.500-3 1 8-7.500-1 2-2z" fill="#2f7d3a"/><path d="M0 15l2.500-4h4L9 15z" fill="#f2cd4c" stroke="#b9962c" stroke-width=".6"/></svg></button>
                    </div>
                    <span class="mx-[5px] h-5 w-px bg-[#c9c3ae]"></span>
                    <button aria-label="Справка"><svg class="size-4" viewBox="0 0 16 16"><circle cx="8" cy="8" r="7.300" fill="#f8c990" stroke="#b5793a"/><circle cx="7" cy="5.500" r="4" fill="#ffe9c9"/><path d="M5.500 6c0-3 5-3 5 0 0 1.800-2.500 1.800-2.500 4M8 11v1.700" fill="none" stroke="#8a3c1a" stroke-width="1.500"/></svg></button>
                </div>
                <form class="flex flex-1 pt-[41px] pl-[43px] text-black">
                    <div class="w-[548px]">
                        <div class="flex h-[37px] w-[371px] border border-[#b0ab92] bg-white">
                            <input type="text" aria-label="Организация" value="Общество с ограниченной ответственностью" class="mt-[3px] h-5 min-w-0 flex-1 pl-[2px] outline-none">
                            <button type="button" aria-label="Выбрать" class="ml-[2px] w-[25px] border-l border-[#b0ab92] bg-[#ebe5d9] pt-1 text-[#5b470f]">...</button>
                            <button type="button" aria-label="Очистить" class="flex w-[24px] items-center justify-center border-l border-[#b0ab92] bg-[#ebe5d9]"><svg class="h-2 w-2" viewBox="0 0 8 8"><path d="M1 0l6 8M7 0L1 8" stroke="#5b470f" stroke-width="1.800"/></svg></button>
                        </div>
                        <div class="mt-[48px] flex gap-[79px] pl-[13px]">
                            <div class="flex h-[37px] w-[182px] border border-[#b0ab92] bg-white">
                                <input type="text" aria-label="Дата начала" value="02.03.2011" class="mt-[3px] h-5 min-w-0 flex-1 pl-[2px] font-['Liberation_Sans',sans-serif] outline-none">
                                <button type="button" aria-label="Выбрать дату начала" class="flex w-[24px] items-center justify-center border-l border-[#b0ab92] bg-[#e9e4d8]"><svg class="h-3 w-[10px]"><use href="#i-cal"/></svg></button>
                            </div>
                            <div class="flex h-[37px] w-[190px] border border-[#b0ab92] bg-white">
                                <input type="text" aria-label="Дата окончания" value="31.05.2011" class="mt-[3px] h-5 min-w-0 flex-1 pl-[2px] font-['Liberation_Sans',sans-serif] outline-none">
                                <button type="button" aria-label="Выбрать дату окончания" class="flex w-[24px] items-center justify-center border-l border-[#b0ab92] bg-[#e9e4d8]"><svg class="h-3 w-[10px]"><use href="#i-cal"/></svg></button>
                            </div>
                        </div>
                    </div>
                    <div class="flex flex-col gap-[39px] pt-[9px] text-[#463811]">
                        <label class="flex items-center gap-[3px]"><input type="radio" name="kind" class="size-[13px] appearance-none rounded-full border border-[#8d8a82] bg-white checked:bg-[radial-gradient(circle,#3b3b3b_0_2px,#fff_3px)]">Приходные Ордера</label>
                        <label class="flex items-center gap-[3px]"><input type="radio" name="kind" checked class="size-[13px] appearance-none rounded-full border border-[#8d8a82] bg-white checked:bg-[radial-gradient(circle,#3b3b3b_0_2px,#fff_3px)]">Расходные Ордера</label>
                    </div>
                </form>
                <footer class="h-[29px] shrink-0 border-t border-[#b0ab92] bg-[#e9e5da]"></footer>
            </div>
        </section>

        <!-- register window -->
        <section class="absolute top-[352px] left-[136px] w-[1668px] border-r border-b border-[#7d7b79] bg-[#cbcbcb] pr-[3px] pb-[2px] pl-[2px]">
            <div class="flex h-[28px] items-center pt-[2px] pl-[2px] text-[#2d2d2d]">
                <svg class="size-4" viewBox="0 0 16 16"><path d="M4 1h7l4 4v10H4z" fill="#f4f8fc" stroke="#8da0bb"/><path d="M9 8h5M9 10.500h5M9 13h5" stroke="#7f96b4"/><path d="M0 14L4 4h1.500l4 10H6.500l-.7-2H3l-.6 2zM3.500 10h2L4.500 7z" fill="#1f4e79"/></svg>
                <h2 class="ml-[5px] font-['Liberation_Sans',sans-serif] text-[18px]">Реестр *</h2>
                <div class="ml-auto flex items-center gap-[13px] pr-[4px]">
                    <button aria-label="Свернуть"><svg class="h-[18px] w-[13px]"><use href="#i-min"/></svg></button>
                    <button aria-label="Развернуть"><svg class="h-[18px] w-[17px]"><use href="#i-max"/></svg></button>
                    <button aria-label="Закрыть"><svg class="size-4"><use href="#i-close"/></svg></button>
                </div>
            </div>
            <div class="border border-[#7d7b70] bg-white">
                <div class="flex h-[442px]">
                    <div class="relative min-w-0 flex-1 overflow-hidden">
                        <table class="w-full table-fixed border-separate border-spacing-0 font-['Liberation_Sans',sans-serif] text-[20px] leading-6 text-black">
                            <colgroup>
                                <col class="w-[55px]"><col class="w-[121px]"><col class="w-[129px]"><col class="w-[679px]"><col class="w-[137px]"><col class="w-[130px]"><col class="w-[95px]"><col class="w-[95px]"><col class="w-[95px]"><col class="w-[95px]"><col>
                            </colgroup>
                            <thead>
                                <tr class="h-[21px] bg-linear-to-b from-[#fffdf2] to-[#faf6e6] text-[16px] leading-4 text-[#463811] [&>th]:border-r [&>th]:border-b [&>th]:border-[#b9b49b] [&>th]:p-0 [&>th]:pt-[4px] [&>th]:font-normal">
                                    <th></th><th>1</th><th>2</th><th class="bg-[#eceadf]"><b class="text-[#1b3a4a]">3</b></th><th>4</th><th>5</th><th>6</th><th>7</th><th>8</th><th>9</th><th></th>
                                </tr>
                            </thead>
                            <tbody id="sheet" class="[&_td]:overflow-hidden [&_td]:border-r [&_td]:border-b [&_td]:border-[#e0e0e0] [&_td]:px-[3px] [&_td]:py-0 [&_td]:whitespace-nowrap [&_th]:border-r [&_th]:border-b [&_th]:border-[#b9b49b] [&_th]:bg-[#fffdf0] [&_th]:p-0 [&_th]:align-bottom [&_th]:text-[16px] [&_th]:leading-[15px] [&_th]:font-normal [&_th]:text-[#463811]">
                                <tr class="h-[33px] text-[16px] leading-[18px]">
                                    <th>1</th><td class="border-b-black! align-bottom">02.03.2011</td><td class="border-b-black! align-bottom">31.05.2011</td><td class="border-b-black! align-bottom">Расходные Ордера</td><td class="border-b-black!"></td><td class="border-b-black!"></td><td></td><td></td><td></td><td></td><td></td>
                                </tr>
                                <tr class="h-[27px]">
                                    <th>2</th><td colspan="4" class="border-black!"></td><td class="border-b-black!"></td><td></td><td></td><td></td><td></td><td></td>
                                </tr>
                                <tr class="h-[27px] text-center [&>td]:pt-[2px]!">
                                    <th>3</th><td class="border-black!">Дата</td><td class="border-black!">Номер</td><td class="border-black!">Контрагент</td><td class="border-black!">Сумма</td><td class="border-b-black!">Счет</td><td></td><td></td><td></td><td></td><td></td>
                                </tr>
                                <tr class="h-[30px] [&>td]:pt-[3px]! [&>td]:pl-[4px]!">
                                    <th>4</th><td class="border-r-black!">05.03.2011</td><td class="border-r-black!">00000000051</td><td class="border-r-black!">по ведомости 30,31 з/плата за февраль 2011 г.</td><td class="border-r-black! text-right">152 100</td><td class="text-center">70</td><td></td><td></td><td></td><td></td><td></td>
                                </tr>
                                <tr class="h-[30px] [&>td]:pt-[3px]! [&>td]:pl-[4px]!">
                                    <th>5</th><td class="border-r-black!">09.03.2011</td><td class="border-r-black!">00000000052</td><td class="border-r-black!">Валуев Саид Джафар Оглы договор купли-продажи №2 от 10.03.2011 г.</td><td class="border-r-black! text-right">35 000</td><td class="text-center">60.01</td><td></td><td></td><td></td><td></td><td></td>
                                </tr>
                                <tr class="h-[30px] [&>td]:pt-[3px]! [&>td]:pl-[4px]!">
                                    <th>6</th><td class="border-r-black!">09.03.2011</td><td class="border-r-black!">00000000053</td><td class="border-r-black!">по ведомости 6,7, 8, 9, 3, 4 з/плата за февраль 2011 г., отпускные</td><td class="border-r-black! text-right">781 222</td><td class="text-center">70</td><td></td><td></td><td></td><td></td><td></td>
                                </tr>
                                <tr class="h-[21px]">
                                    <th class="bg-[#eceadf]!"><b class="text-[#1b3a4a]">7</b></th><td></td><td></td><td class="outline-3 -outline-offset-2 outline-black"></td><td></td><td></td><td></td><td></td><td></td><td></td><td></td>
                                </tr>
                            </tbody>
                        </table>
                        <!-- page break marks -->
                        <div class="absolute top-[197px] right-0 left-[55px] h-px bg-[repeating-linear-gradient(90deg,#000_0_4px,#fff_4px_5px)]"></div>
                        <div class="absolute top-[21px] bottom-0 left-[1250px] w-px bg-[repeating-linear-gradient(180deg,#000_0_4px,#fff_4px_5px)]"></div>
                    </div>
                    <div class="flex w-[16px] flex-col border-l border-[#b9b49b] bg-[#fbf9f3]">
                        <button aria-label="Вверх" class="flex h-[21px] items-center justify-center border-b border-[#b9b49b] bg-[#f5f2e4]"><svg class="h-[7px] w-[7px]" viewBox="0 0 7 7"><path d="M3.500 0L7 7H0z" fill="#bdbaad"/></svg></button>
                        <div class="flex h-[310px] items-center justify-center border-b border-[#b9b49b] bg-linear-to-r from-[#f6f4ea] to-[#e9e3bf]"><span class="size-[4px] rounded-full bg-[#cbc8b4]"></span></div>
                        <button aria-label="Вниз" class="mt-auto flex h-[21px] items-center justify-center border-t border-[#b9b49b] bg-[#f0eddd]"><svg class="h-[7px] w-[7px]" viewBox="0 0 7 7"><path d="M0 0h7L3.500 7z" fill="#6d6b62"/></svg></button>
                    </div>
                </div>
                <div class="flex h-[16px] border-t border-[#b9b49b] bg-[#fbf9f3]">
                    <button aria-label="Влево" class="flex w-[21px] items-center justify-center border-r border-[#b9b49b] bg-[#f5f2e4]"><svg class="h-[7px] w-[7px]" viewBox="0 0 7 7"><path d="M7 0v7L0 3.500z" fill="#bdbaad"/></svg></button>
                    <div class="flex w-[1460px] items-center justify-center border-r border-[#b9b49b] bg-linear-to-b from-[#f8f7ec] via-[#ece8c9] to-[#e6dfba]"><span class="size-[4px] rounded-full bg-[#cbc8b4]"></span></div>
                    <button aria-label="Вправо" class="ml-auto flex w-[22px] items-center justify-center border-r border-l border-[#b9b49b] bg-[#f0eddd]"><svg class="h-[7px] w-[7px]" viewBox="0 0 7 7"><path d="M0 0v7l7-3.500z" fill="#6d6b62"/></svg></button>
                    <span class="w-[15px] bg-[#fdfbf2]"></span>
                </div>
            </div>
        </section>
    </div>

    <script>
        // empty rows below the data
        const sheet = document.getElementById("sheet");
        for (let n = 8; n <= 18; n++) {
            const row = sheet.insertRow();
            row.className = "h-[21px]";
            row.innerHTML = "<th>" + n + "</th>" + "<td></td>".repeat(10);
        }
    </script>
</body>
</html>
